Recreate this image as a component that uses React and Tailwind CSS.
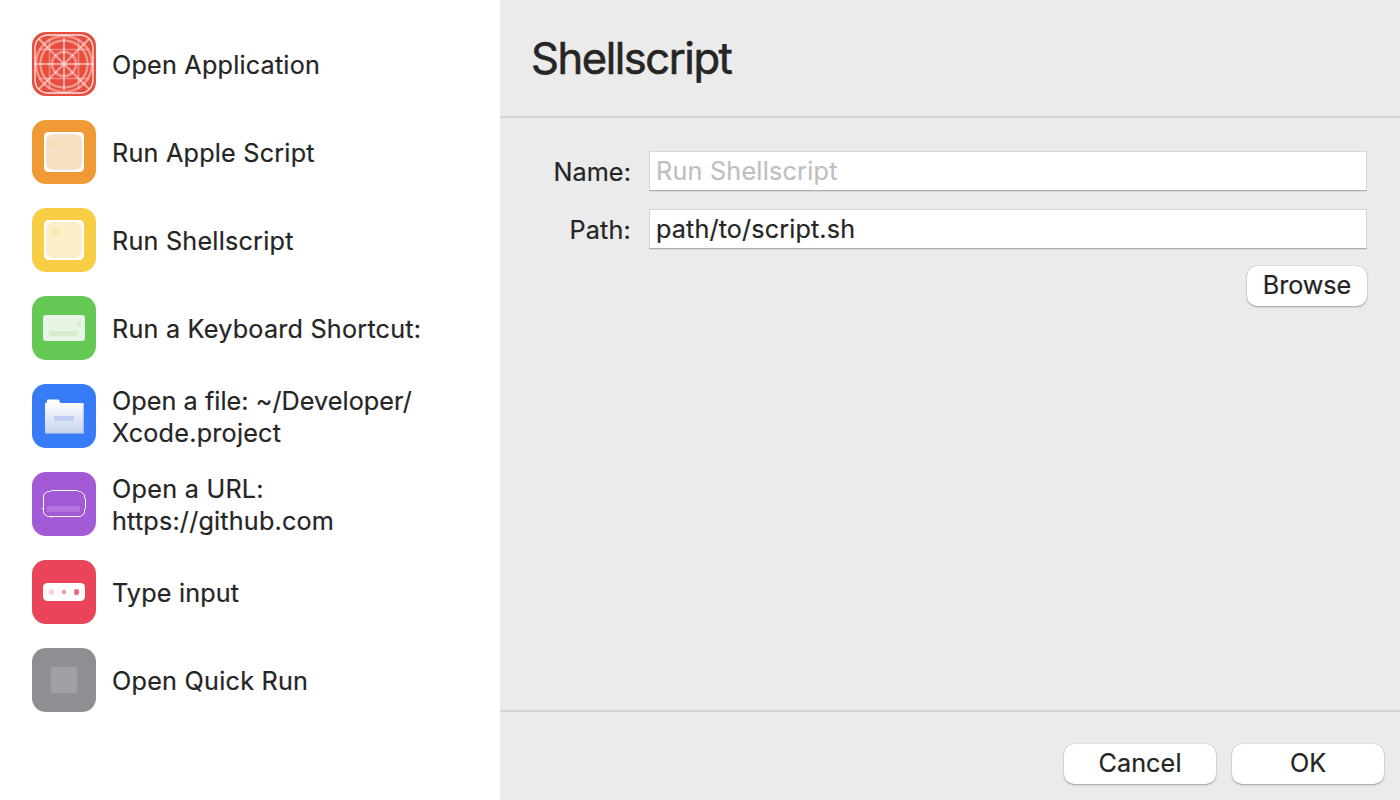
import React from "react";

const AppGlyph = () => (
  <>
    <g fill="none" stroke="#fff">
      <rect x="3" y="3" width="58" height="58" rx="13" strokeWidth="1.3" strokeOpacity="0.85" />
      <g strokeOpacity="0.4" strokeWidth="2">
        <circle cx="32" cy="32" r="28" strokeWidth="2.6" />
        <circle cx="32" cy="32" r="23.5" strokeWidth="2.6" />
        <circle cx="32" cy="32" r="12" strokeWidth="2.6" />
        <path d="M32 6V58M3 32H61" strokeOpacity="0.5" />
        <path d="M7 7L57 57M57 7L7 57" strokeOpacity="0.5" />
        <path d="M17.5 7V57M46.5 7V57M7 17.5H57M7 46.5H57" strokeWidth="1.6" strokeOpacity="0.35" />
      </g>
    </g>
    <rect x="30.5" y="30.5" width="3" height="3" fill="#fbd9d3" />
  </>
);

const ScriptGlyph = ({ fill, mark }) => (
  <>
    <rect x="12" y="12" width="40" height="40" rx="4.5" fill="#fff" />
    <rect x="14" y="14" width="36" height="36" rx="6.5" fill={fill} />
    <rect x="19" y="21" width="9" height="6" fill={mark} />
  </>
);

const KeyboardGlyph = () => (
  <>
    <rect x="11" y="19" width="42" height="26" rx="3" fill="#e7f5e4" />
    <rect x="45" y="25" width="4" height="5" fill="#d3edcd" />
    <rect x="17" y="35" width="28.5" height="5" fill="#d3edcd" />
  </>
);

const FolderGlyph = () => (
  <>
    <defs>
      <linearGradient id="folder" x1="0" y1="0" x2="0" y2="1">
        <stop offset="0" stopColor="#fff" />
        <stop offset="0.2" stopColor="#f7f9fd" />
        <stop offset="1" stopColor="#c5d2ec" />
      </linearGradient>
    </defs>
    <path d="M13 19.5 15 18V16.5Q15 15.5 16 15.5H26.5L28.5 19H50.5Q51.8 19 51.8 20.3V49.5H13Z" fill="url(#folder)" />
    <path d="M51.2 21V49.2H13.5" fill="none" stroke="#9cb9f2" strokeOpacity="0.6" />
    <rect x="22" y="32" width="20" height="5" fill="#bfd0f1" />
  </>
);

const UrlGlyph = () => (
  <>
    <path d="M19.5 18.5H45.5L46.5 19.5H48.5L52.5 23V25.5L53.5 27V36.5L52.5 37V41L49 44.5H15L11.5 41V23L15 19.5H18.5Z" fill="none" stroke="#fff" strokeWidth="1" />
    <rect x="10" y="36" width="1" height="1" fill="#fff" />
    <rect x="19" y="45" width="1" height="1" fill="#fff" />
    <rect x="15" y="34" width="33" height="6" fill="#b474df" />
  </>
);

const TypeGlyph = () => (
  <>
    <rect x="11" y="23" width="42" height="18" rx="4.5" fill="#fff" />
    <ellipse cx="19.5" cy="32" rx="2.6" ry="3.1" fill="#fad0d6" />
    <rect x="30" y="30" width="4" height="4" fill="#f3a0ad" />
    <ellipse cx="44.5" cy="32" rx="2.6" ry="3.1" fill="#ed6b7f" />
  </>
);

const items = [
  { lines: [["Open Application", "tracking-[0.2px]"]], bg: "bg-[#e84d3d]", glyph: <AppGlyph /> },
  { lines: [["Run Apple Script", "tracking-[0.21px]"]], bg: "bg-[#f09a37]", glyph: <ScriptGlyph fill="#f8dfc3" mark="#f7dcab" /> },
  { lines: [["Run Shellscript", "tracking-[0.22px]"]], bg: "bg-[#f7ce46]", glyph: <ScriptGlyph fill="#fbefc8" mark="#f9e7ae" /> },
  { lines: [["Run a Keyboard Shortcut:", "tracking-[0.22px]"]], bg: "bg-[#66c956]", glyph: <KeyboardGlyph /> },
  { lines: [["Open a file: ~/Developer/", "tracking-[0.05px]"], ["Xcode.project", "tracking-[0.22px]"]], bg: "bg-[#377cf6]", glyph: <FolderGlyph /> },
  { lines: [["Open a URL:", "tracking-[0.26px]"], ["https://github.com", "tracking-[0.19px]"]], bg: "bg-[#a35ad7]", glyph: <UrlGlyph /> },
  { lines: [["Type input", "tracking-[0.17px]"]], bg: "bg-[#e94459]", glyph: <TypeGlyph /> },
  { lines: [["Open Quick Run", "tracking-[0.24px]"]], bg: "bg-[#8f8e93]", glyph: <rect x="19" y="19" width="26" height="26" fill="#a09fa3" /> },
];

const Button = ({ className, children }) => (
  <button
    className={`h-10 rounded-[10px] bg-white pb-[2px] leading-[38px] shadow-[0_0_1px_rgba(0,0,0,0.3),0_1px_2px_rgba(0,0,0,0.3)] ${className}`}
  >
    {children}
  </button>
);

const Field = ({ label, labelClass, inputClass, ...input }) => (
  <label className="flex h-10 items-center">
    <span className={`w-[131px] pt-[2px] text-right leading-8 ${labelClass}`}>{label}</span>
    <input
      className={`ml-[18px] h-10 w-[718px] border border-[#d6d6d6] border-b-[#adadad] bg-white pl-[6px] shadow-[0_1px_0_rgba(0,0,0,0.08)] outline-none placeholder:text-[#bfbfbf] ${inputClass}`}
      {...input}
    />
  </label>
);

export default function App() {
  return (
    <div className="flex h-[800px] w-[1400px] overflow-hidden bg-white font-['Inter',sans-serif] text-[25.2px] text-[#252525] [-webkit-text-stroke:0.2px]">
      <aside className="flex w-[500px] flex-col gap-6 p-8">
        {items.map(({ lines, bg, glyph }) => (
          <div key={lines[0][0]} className="flex h-16 items-center gap-4">
            <div className={`size-16 shrink-0 overflow-hidden rounded-[14px] ${bg}`}>
              <svg viewBox="0 0 64 64" className="size-16">{glyph}</svg>
            </div>
            <div className="pt-[2px] leading-8 whitespace-nowrap">
              {lines.map(([text, tracking]) => (
                <div key={text}><span className={tracking}>{text}</span></div>
              ))}
            </div>
          </div>
        ))}
      </aside>
      <main className="flex w-[900px] flex-col bg-[#ebebeb]">
        <header className="flex h-[118px] items-center border-b-2 border-[#d3d3d3] px-8">
          <h1 className="-ml-px text-[43.5px] leading-[52px] font-normal tracking-[-1.45px] [-webkit-text-stroke:0.6px]">Shellscript</h1>
        </header>
        <section className="flex flex-1 flex-col gap-[18px] pt-[33px]">
          <Field label="Name:" labelClass="tracking-[0.1px]" inputClass="tracking-[0.22px]" placeholder="Run Shellscript" />
          <Field label="Path:" labelClass="tracking-[0.2px]" inputClass="tracking-[0.13px]" defaultValue="path/to/script.sh" />
          <div className="-mt-px flex justify-end pr-[33px]">
            <Button className="w-[120px] tracking-[-0.04px]">Browse</Button>
          </div>
        </section>
        <footer className="flex h-[90px] items-start justify-end gap-4 border-t-2 border-[#d3d3d3] pt-8 pr-4">
          <Button className="w-[152px] tracking-[0.1px]">Cancel</Button>
          <Button className="w-[152px] tracking-[-0.04px]">OK</Button>
        </footer>
      </main>
    </div>
  );
}
